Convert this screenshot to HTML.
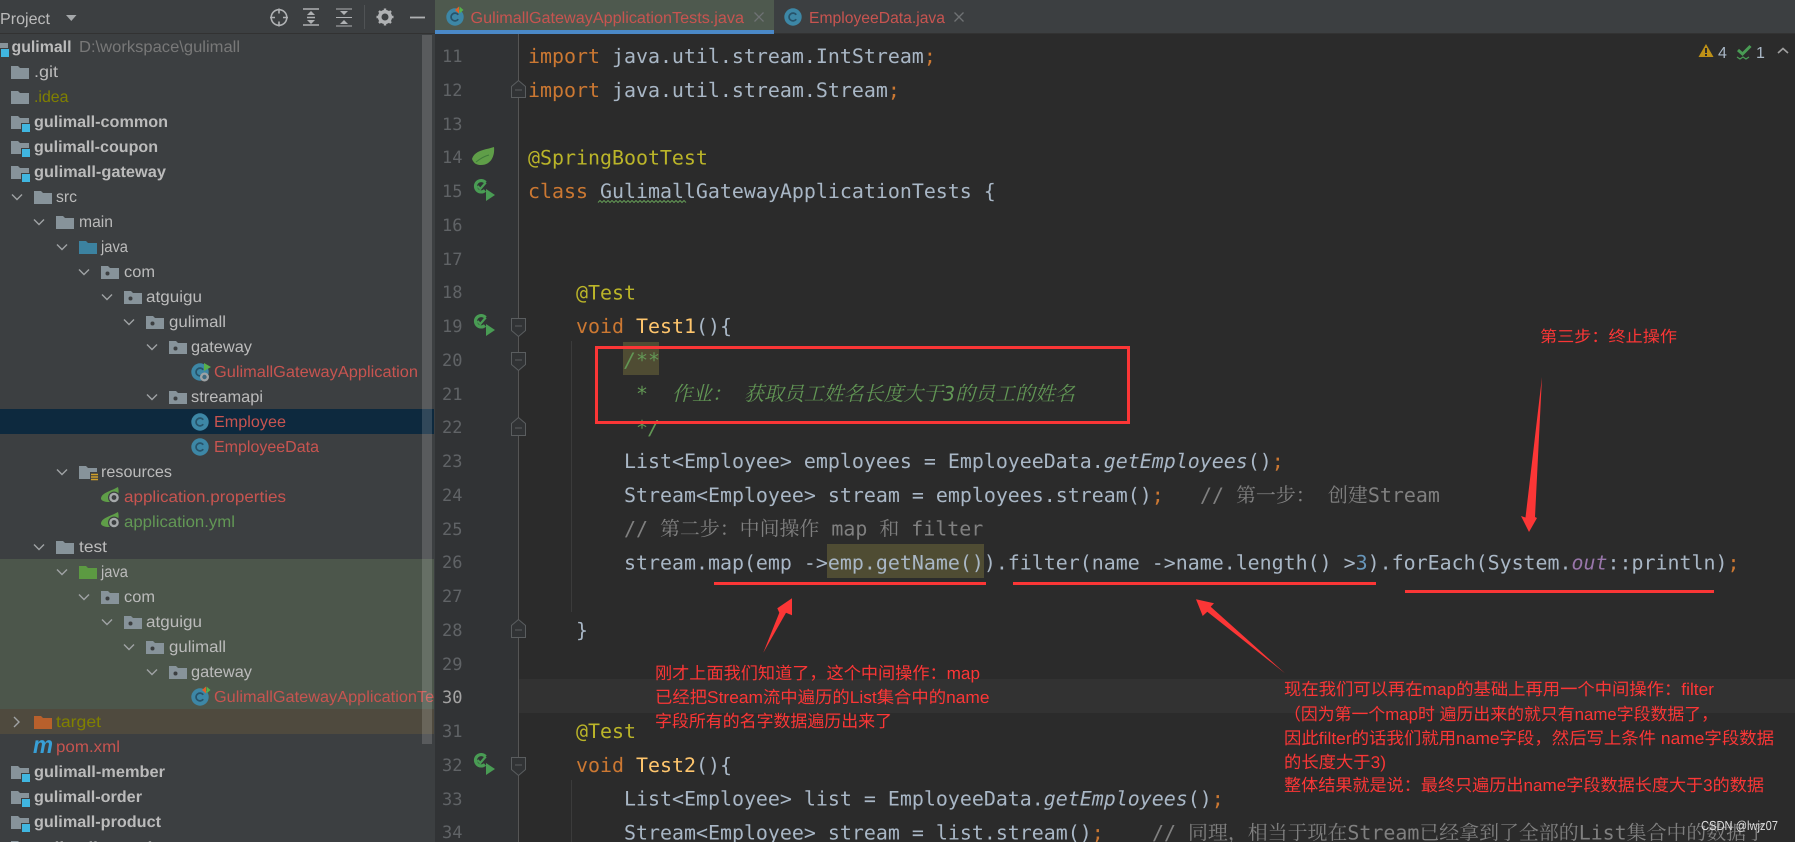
<!DOCTYPE html>
<html lang="zh"><head><meta charset="utf-8"><title>IDE</title>
<style>
html,body{margin:0;padding:0;background:#2b2b2b;overflow:hidden}
svg{display:block;text-rendering:geometricPrecision}
.s{font:16px "Liberation Sans","Noto Sans CJK SC",sans-serif;fill:#bbb}
.b{font-weight:bold}.r{fill:#c75450}.g{fill:#629755}.o{fill:#808000}.d{fill:#787878}
.m{font:19.93px "DejaVu Sans Mono","Noto Serif CJK SC",monospace;fill:#a9b7c6;white-space:pre}
.k{fill:#cc7832}.a{fill:#bbb529}.f{fill:#ffc66d}.c{fill:#808080}.dc{fill:#629755;font-style:italic}.n{fill:#6897bb}.p{fill:#9876aa;font-style:italic}.i{font-style:italic}
.l{font:17px "DejaVu Sans Mono",monospace;fill:#606366}
.t{font:17px "Liberation Sans","Noto Sans CJK SC",sans-serif;fill:#fb3636}
</style></head><body>
<svg width="1795" height="842" viewBox="0 0 1795 842" xmlns="http://www.w3.org/2000/svg">
<defs>
<g id="fd"><path d="M0 0h7l2 2h9v11H0z" fill="#87939a"/></g>
<g id="pk"><use href="#fd"/><circle cx="6.5" cy="7.5" r="2" fill="#3c3f41"/></g>
<g id="md"><use href="#fd"/><rect x="10" y="7" width="10" height="10" fill="#3c3f41"/><rect x="11" y="8" width="8" height="8" fill="#40b6e0"/></g>
<path id="ch" d="M-5 -2.5L0 2.5L5 -2.5" fill="none" stroke="#a0a3a5" stroke-width="1.4"/>
<g id="cl"><circle r="8.7" fill="#3d87a6"/><path d="M3.2 -2.2A3.9 3.9 0 1 0 3.2 2.2" fill="none" stroke="#27536a" stroke-width="1.7"/></g>
<g id="sp"><path d="M0 8C0 2 8 1 17 -4C19 3 16 11 8 11C4 11 1 10 0 8Z" fill="#5f9e48"/><circle cx="13" cy="6.5" r="6" fill="#3c3f41"/><circle cx="13" cy="6.5" r="4.8" fill="#a5a8aa"/><circle cx="13" cy="6.5" r="2.4" fill="#3c3f41"/></g>
<g id="rn"><path d="M11.500 3.500A5.700 5.700 0 1 0 11 11.500" fill="none" stroke="#499c54" stroke-width="3.2"/><path d="M3.500 7l2.800 3l5.500-6.500" fill="none" stroke="#499c54" stroke-width="2.200"/><path d="M12 10l9 6l-9 6z" fill="#499c54"/></g>
<path id="x" d="M-4.5 -4.5L4.5 4.5M4.5 -4.5L-4.5 4.5" stroke="#6f7274" stroke-width="1.3" fill="none"/>
<clipPath id="sc"><rect x="0" y="0" width="434" height="842"/></clipPath>
</defs>

<!-- sidebar -->
<rect width="435" height="842" fill="#3c3f41"/>
<rect y="409" width="434" height="25" fill="#0d293e"/>
<rect y="559" width="434" height="150" fill="#4c564b"/>
<rect y="709" width="434" height="25" fill="#4f4a3e"/>
<rect width="435" height="33" fill="#3c3f41"/>
<rect y="33" width="435" height="1" fill="#323232"/>

<text class="s" x="0" y="24" textLength="50" lengthAdjust="spacingAndGlyphs">Project</text>
<path d="M66 15h10.5l-5.2 6z" fill="#a5a8aa"/>
<g fill="none" stroke="#afb1b3" stroke-width="1.6">
<circle cx="279" cy="17.5" r="7.8"/><path d="M279 8.5v5M279 21.5v5M270 17.5h5M283 17.5h5"/>
<path d="M303 9h16M303 25h16M307 17.5h8"/>
<path d="M336 9h16M336 17.5h16M336 26h16" stroke-width="1"/>
<path d="M410 17.5h15" stroke-width="1.8"/>
</g>
<path d="M311 11l4 4h-8zM311 24l4-4h-8zM344 15l-4-4h8zM344 20l-4 4h8z" fill="#afb1b3"/>
<rect x="364" y="5" width="1" height="24" fill="#505355"/>
<circle cx="385" cy="17" r="5.3" fill="none" stroke="#afb1b3" stroke-width="3.6"/>
<path d="M385 8.5v3M385 22.5v3M376.5 17h3M390.500 17h3M379 11l2 2M391 11l-2 2M379 23l2-2M391 23l-2-2" stroke="#afb1b3" stroke-width="2.4"/>

<g clip-path="url(#sc)">
<use href="#md" x="-10" y="41"/>
<text class="s b" x="11.500" y="52" textLength="60" lengthAdjust="spacingAndGlyphs">gulimall</text>
<text class="s d" x="79" y="52" textLength="161" lengthAdjust="spacingAndGlyphs">D:\workspace\gulimall</text>
<use href="#fd" x="11" y="66"/><text class="s" x="34" y="77" textLength="24" lengthAdjust="spacingAndGlyphs">.git</text>
<use href="#fd" x="11" y="91"/><text class="s o" x="34" y="102" textLength="34.500" lengthAdjust="spacingAndGlyphs">.idea</text>
<use href="#md" x="11" y="116"/><text class="s b" x="34" y="127" textLength="134" lengthAdjust="spacingAndGlyphs">gulimall-common</text>
<use href="#md" x="11" y="141"/><text class="s b" x="34" y="152" textLength="124" lengthAdjust="spacingAndGlyphs">gulimall-coupon</text>
<use href="#md" x="11" y="166"/><text class="s b" x="34" y="177" textLength="132" lengthAdjust="spacingAndGlyphs">gulimall-gateway</text>
<use href="#ch" x="17" y="197"/><use href="#fd" x="34" y="191"/><text class="s" x="56" y="202" textLength="21" lengthAdjust="spacingAndGlyphs">src</text>
<use href="#ch" x="39" y="222"/><use href="#fd" x="56" y="216"/><text class="s" x="79" y="227" textLength="34" lengthAdjust="spacingAndGlyphs">main</text>
<use href="#ch" x="62" y="247"/><path d="M79 241h7l2 2h9v11H79z" fill="#3c82a0"/><text class="s" x="101" y="252" textLength="27" lengthAdjust="spacingAndGlyphs">java</text>
<use href="#ch" x="84" y="272"/><use href="#pk" x="101" y="266"/><text class="s" x="124" y="277" textLength="31" lengthAdjust="spacingAndGlyphs">com</text>
<use href="#ch" x="107" y="297"/><use href="#pk" x="124" y="291"/><text class="s" x="146" y="302" textLength="56" lengthAdjust="spacingAndGlyphs">atguigu</text>
<use href="#ch" x="129" y="322"/><use href="#pk" x="146" y="316"/><text class="s" x="169" y="327" textLength="57" lengthAdjust="spacingAndGlyphs">gulimall</text>
<use href="#ch" x="152" y="347"/><use href="#pk" x="169" y="341"/><text class="s" x="191" y="352" textLength="61" lengthAdjust="spacingAndGlyphs">gateway</text>
<use href="#cl" x="200" y="372"/><path d="M204 363l7 4l-7 4z" fill="#58b04a"/><circle cx="204.500" cy="377" r="4.500" fill="#9ea2a4"/><circle cx="204.500" cy="377" r="2.200" fill="#3d6a80"/>
<text class="s r" x="214" y="377" textLength="204" lengthAdjust="spacingAndGlyphs">GulimallGatewayApplication</text>
<use href="#ch" x="152" y="397"/><use href="#pk" x="169" y="391"/><text class="s" x="191" y="402" textLength="72" lengthAdjust="spacingAndGlyphs">streamapi</text>
<use href="#cl" x="200" y="422"/><text class="s r" x="214" y="427" textLength="72" lengthAdjust="spacingAndGlyphs">Employee</text>
<use href="#cl" x="200" y="447"/><text class="s r" x="214" y="452" textLength="105" lengthAdjust="spacingAndGlyphs">EmployeeData</text>
<use href="#ch" x="62" y="472"/><use href="#fd" x="79" y="466"/><rect x="90" y="472" width="8" height="10" fill="#3c3f41"/><path d="M91 474.500h7M91 477h7M91 479.500h7" stroke="#d0a02a" stroke-width="1.500"/>
<text class="s" x="101" y="477" textLength="71" lengthAdjust="spacingAndGlyphs">resources</text>
<use href="#sp" x="101" y="491"/><text class="s r" x="124" y="502" textLength="162" lengthAdjust="spacingAndGlyphs">application.properties</text>
<use href="#sp" x="101" y="516"/><text class="s g" x="124" y="527" textLength="111" lengthAdjust="spacingAndGlyphs">application.yml</text>
<use href="#ch" x="39" y="547"/><use href="#fd" x="56" y="541"/><text class="s" x="79" y="552" textLength="28" lengthAdjust="spacingAndGlyphs">test</text>
<use href="#ch" x="62" y="572"/><path d="M79 566h7l2 2h9v11H79z" fill="#5c9a42"/><text class="s" x="101" y="577" textLength="27" lengthAdjust="spacingAndGlyphs">java</text>
<use href="#ch" x="84" y="597"/><use href="#pk" x="101" y="591"/><text class="s" x="124" y="602" textLength="31" lengthAdjust="spacingAndGlyphs">com</text>
<use href="#ch" x="107" y="622"/><use href="#pk" x="124" y="616"/><text class="s" x="146" y="627" textLength="56" lengthAdjust="spacingAndGlyphs">atguigu</text>
<use href="#ch" x="129" y="647"/><use href="#pk" x="146" y="641"/><text class="s" x="169" y="652" textLength="57" lengthAdjust="spacingAndGlyphs">gulimall</text>
<use href="#ch" x="152" y="672"/><use href="#pk" x="169" y="666"/><text class="s" x="191" y="677" textLength="61" lengthAdjust="spacingAndGlyphs">gateway</text>
<use href="#cl" x="200" y="697"/><path d="M206 686.500l-4 3.500l4 3.500z" fill="#e0602a"/><path d="M206.500 686.500l4 3.500l-4 3.500z" fill="#58b04a"/>
<text class="s r" x="214" y="702" textLength="241" lengthAdjust="spacingAndGlyphs">GulimallGatewayApplicationTests</text>
<path d="M14 717l5 5l-5 5" fill="none" stroke="#a0a3a5" stroke-width="1.400"/><path d="M34 716h7l2 2h9v11H34z" fill="#b8602c"/><text class="s o" x="56" y="727" textLength="45" lengthAdjust="spacingAndGlyphs">target</text>
<text x="33" y="753" style="font:italic bold 24px 'Liberation Sans',sans-serif;fill:#389fd6" textLength="20" lengthAdjust="spacingAndGlyphs">m</text><text class="s r" x="56" y="752" textLength="64" lengthAdjust="spacingAndGlyphs">pom.xml</text>
<use href="#md" x="11" y="766"/><text class="s b" x="34" y="777" textLength="131" lengthAdjust="spacingAndGlyphs">gulimall-member</text>
<use href="#md" x="11" y="791"/><text class="s b" x="34" y="802" textLength="108" lengthAdjust="spacingAndGlyphs">gulimall-order</text>
<use href="#md" x="11" y="816"/><text class="s b" x="34" y="827" textLength="127" lengthAdjust="spacingAndGlyphs">gulimall-product</text>
<use href="#md" x="11" y="841"/><text class="s b" x="34" y="853" textLength="124" lengthAdjust="spacingAndGlyphs">gulimall-search</text>
</g>
<rect x="422" y="35" width="10" height="709" fill="#fff" fill-opacity=".15"/>

<!-- tabs -->
<rect x="435" width="1360" height="33" fill="#3c3f41"/>
<rect x="435" y="33" width="1360" height="1" fill="#323232"/>
<rect x="435" width="339" height="30" fill="#4e594e"/>
<rect x="435" y="30" width="339" height="4" fill="#4a88c7"/>
<use href="#cl" x="455" y="17"/><path d="M459 6.500l-4 3.500l4 3.500z" fill="#e0602a"/><path d="M459.500 6.500l4 3.500l-4 3.500z" fill="#58b04a"/>
<text class="s r" x="470.500" y="23" textLength="273.500" lengthAdjust="spacingAndGlyphs">GulimallGatewayApplicationTests.java</text>
<use href="#x" x="759" y="17"/>
<use href="#cl" x="793" y="17"/>
<text class="s r" x="809" y="23" textLength="136" lengthAdjust="spacingAndGlyphs">EmployeeData.java</text>
<use href="#x" x="959" y="17"/>

<!-- editor -->
<rect x="435" y="34" width="83" height="808" fill="#313335"/>
<rect x="518" y="34" width="1277" height="808" fill="#2b2b2b"/>
<rect x="519" y="679" width="1276" height="34" fill="#323232"/>
<rect x="518" y="34" width="1" height="808" fill="#555"/>
<rect x="571" y="341" width="1" height="271" fill="#3b3b3b"/>
<rect x="571" y="780" width="1" height="62" fill="#3b3b3b"/>
<rect x="623" y="342" width="36" height="33" fill="#4f4c33"/>
<rect x="827" y="544" width="157" height="34" fill="#4f4c33"/>

<g class="ln">
<text class="l" x="442" y="62">11</text><text class="l" x="442" y="96">12</text><text class="l" x="442" y="130">13</text><text class="l" x="442" y="163">14</text><text class="l" x="442" y="197">15</text><text class="l" x="442" y="231">16</text><text class="l" x="442" y="265">17</text><text class="l" x="442" y="298">18</text><text class="l" x="442" y="332">19</text><text class="l" x="442" y="366">20</text><text class="l" x="442" y="400">21</text><text class="l" x="442" y="433">22</text><text class="l" x="442" y="467">23</text><text class="l" x="442" y="501">24</text><text class="l" x="442" y="535">25</text><text class="l" x="442" y="568">26</text><text class="l" x="442" y="602">27</text><text class="l" x="442" y="636">28</text><text class="l" x="442" y="670">29</text><text class="l" x="442" y="703" style="fill:#a4a3a3">30</text><text class="l" x="442" y="737">31</text><text class="l" x="442" y="771">32</text><text class="l" x="442" y="805">33</text><text class="l" x="442" y="838">34</text>
</g>

<!-- fold markers -->
<g fill="#313335" stroke="#5a5d5f" stroke-width="1">
<path d="M511.500 97.500h14v-11l-7-6l-7 6z"/>
<path d="M511.500 318.500h14v12l-7 6l-7-6z"/>
<path d="M511.500 352.500h14v12l-7 6l-7-6z"/>
<path d="M511.500 435.500h14v-12l-7-6l-7 6z"/>
<path d="M511.500 637.500h14v-12l-7-6l-7 6z"/>
<path d="M511.500 757.500h14v12l-7 6l-7-6z"/>
<path d="M515 90h7M515 326h7M515 360h7M515 428h7M515 630h7M515 765h7" fill="none"/>
</g>

<!-- gutter icons -->
<path d="M472 159C475 150 485 150 494 147C495 156 491 165 481 165C477 165 474 164 472 159Z" fill="#5f9e48"/>
<path d="M476 162C481 158 485 156 489 155" fill="none" stroke="#3f7a3a" stroke-width="1"/>
<use href="#rn" x="474" y="179"/><use href="#rn" x="474" y="314"/><use href="#rn" x="474" y="753"/>

<!-- code -->
<text class="m" x="528" y="63"><tspan class="k">import</tspan> java.util.stream.IntStream<tspan class="k">;</tspan></text>
<text class="m" x="528" y="96.800"><tspan class="k">import</tspan> java.util.stream.Stream<tspan class="k">;</tspan></text>
<text class="m a" x="528" y="164.300">@SpringBootTest</text>
<text class="m" x="528" y="198"><tspan class="k">class</tspan> GulimallGatewayApplicationTests {</text>
<path d="M598 202.500l2 -2l2 2l2 -2l2 2l2 -2l2 2l2 -2l2 2l2 -2l2 2l2 -2l2 2l2 -2l2 2l2 -2l2 2l2 -2l2 2l2 -2l2 2l2 -2l2 2l2 -2l2 2l2 -2l2 2l2 -2l2 2l2 -2l2 2l2 -2l2 2l2 -2l2 2l2 -2l2 2l2 -2l2 2l2 -2l2 2l2 -2l2 2l2 -2l2 2" fill="none" stroke="#629755" stroke-width="1"/>
<text class="m a" x="576" y="299.300">@Test</text>
<text class="m" x="576" y="333.100"><tspan class="k">void</tspan> <tspan class="f">Test1</tspan>(){</text>
<text class="m dc" x="624" y="366.800">/**</text>
<text class="m dc" x="636" y="400.600">*</text>
<text class="m dc" x="672" y="400.600">作业：</text>
<text class="m dc" x="744" y="400.600">获取员工姓名长度大于3的员工的姓名</text>
<text class="m dc" x="636" y="434.400">*/</text>
<text class="m" x="624" y="468.100">List&lt;Employee&gt; employees = EmployeeData.<tspan class="i">getEmployees</tspan>()<tspan class="k">;</tspan></text>
<text class="m" x="624" y="501.900">Stream&lt;Employee&gt; stream = employees.stream()<tspan class="k">;</tspan></text>
<text class="m c" x="1200" y="501.900">// 第一步：</text>
<text class="m c" x="1328" y="501.900">创建Stream</text>
<text class="m c" x="624" y="535.600">// 第二步：中间操作 map 和 filter</text>
<text class="m" x="624" y="569.400">stream.map(emp -&gt;emp.getName()).filter(name -&gt;name.length() &gt;<tspan class="n">3</tspan>).forEach(System.<tspan class="p">out</tspan>::println)<tspan class="k">;</tspan></text>
<text class="m" x="576" y="636.900">}</text>
<text class="m a" x="576" y="738.200">@Test</text>
<text class="m" x="576" y="772"><tspan class="k">void</tspan> <tspan class="f">Test2</tspan>(){</text>
<text class="m" x="624" y="805.700">List&lt;Employee&gt; list = EmployeeData.<tspan class="i">getEmployees</tspan>()<tspan class="k">;</tspan></text>
<text class="m" x="624" y="839.500">Stream&lt;Employee&gt; stream = list.stream()<tspan class="k">;</tspan></text>
<text class="m c" x="1152" y="839.500">// 同理，相当于现在Stream已经拿到了全部的List集合中的数据了</text>

<!-- inspections -->
<path d="M1706 44l7.500 13h-15z" fill="#be9117"/><rect x="1705" y="48" width="2" height="5" fill="#2b2b2b"/><rect x="1705" y="54" width="2" height="2" fill="#2b2b2b"/>
<text x="1718" y="58" style="font:16px 'Liberation Sans',sans-serif;fill:#a9b7c6">4</text>
<path d="M1738 50l4.500 4l8-8" fill="none" stroke="#499c54" stroke-width="3"/>
<path d="M1737 57l3 2l3-2l3 2l3-2" fill="none" stroke="#499c54" stroke-width="1.200"/>
<text x="1756" y="58" style="font:16px 'Liberation Sans',sans-serif;fill:#a9b7c6">1</text>
<path d="M1778 53l5-4.500l5 4.500" fill="none" stroke="#a0a0a0" stroke-width="1.600"/>

<!-- annotations -->
<rect x="596.500" y="347.500" width="532" height="75" fill="none" stroke="#fb3636" stroke-width="3"/>
<rect x="714" y="582" width="272" height="3" fill="#fb3636"/>
<rect x="1013" y="582" width="363" height="3" fill="#fb3636"/>
<rect x="1405" y="590" width="309" height="3" fill="#fb3636"/>
<path d="M763.300 652.700L779.300 612.700L777.300 608.300L792 598.300L792 615.300L786 612.700Z" fill="#fb3636"/>
<path d="M1542 377L1535 517L1537 518L1529 532L1521 516L1525.500 517.500Z" fill="#fb3636"/>
<path d="M1285 673.300L1210.700 606.700L1214 603.300L1196 599.300L1202.700 616L1207.300 611.700Z" fill="#fb3636"/>

<text class="t" x="655" y="679" textLength="325" lengthAdjust="spacingAndGlyphs">刚才上面我们知道了，这个中间操作：map</text>
<text class="t" x="655" y="703" textLength="334.500" lengthAdjust="spacingAndGlyphs">已经把Stream流中遍历的List集合中的name</text>
<text class="t" x="655" y="727" textLength="237" lengthAdjust="spacingAndGlyphs">字段所有的名字数据遍历出来了</text>
<text class="t" x="1540" y="342" textLength="137" lengthAdjust="spacingAndGlyphs" style="font-size:16px">第三步：终止操作</text>
<text class="t" x="1284" y="695" textLength="430" lengthAdjust="spacingAndGlyphs">现在我们可以再在map的基础上再用一个中间操作：filter</text>
<text class="t" x="1284" y="720" textLength="434" lengthAdjust="spacingAndGlyphs">（因为第一个map时 遍历出来的就只有name字段数据了，</text>
<text class="t" x="1284" y="744" textLength="490" lengthAdjust="spacingAndGlyphs">因此filter的话我们就用name字段，然后写上条件 name字段数据</text>
<text class="t" x="1284" y="768" textLength="102" lengthAdjust="spacingAndGlyphs">的长度大于3)</text>
<text class="t" x="1284" y="791" textLength="480" lengthAdjust="spacingAndGlyphs">整体结果就是说：最终只遍历出name字段数据长度大于3的数据</text>
<text x="1701" y="830" textLength="77" lengthAdjust="spacingAndGlyphs" style="font:13px 'Liberation Sans',sans-serif;fill:#dcdcdc">CSDN @lwjz07</text>
</svg>
</body></html>
